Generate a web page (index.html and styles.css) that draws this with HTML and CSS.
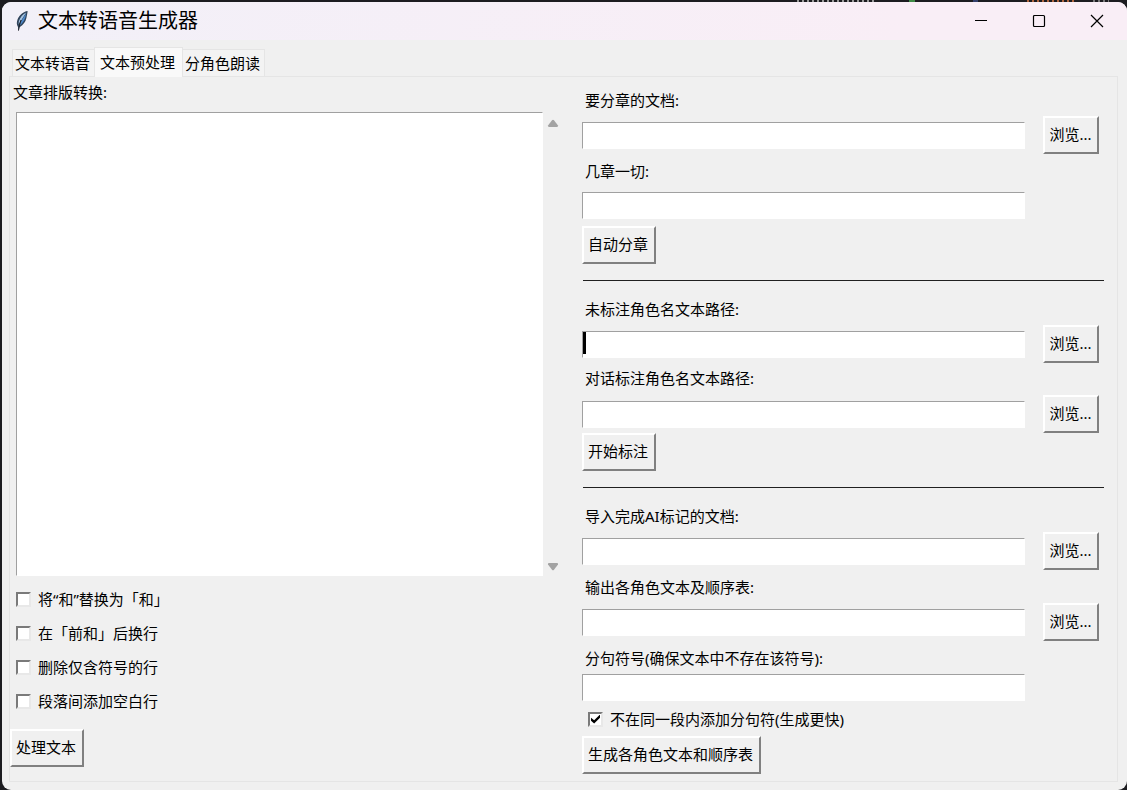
FILE: index.html
```html
<!DOCTYPE html>
<html lang="zh-CN">
<head>
<meta charset="utf-8">
<title>文本转语音生成器</title>
<link rel="stylesheet" href="styles.css">
</head>
<body>
<div class="window">
  <header class="titlebar">
    <svg class="feather" width="14" height="22" viewBox="0 0 14 22" aria-hidden="true">
      <path d="M12.6 1C8.4 1.6 4.4 5 2.6 9.2C1.4 12.2 1.6 14.8 3 17L3.6 20.4L4.6 17.2C8.6 14.6 10.6 11.8 11.4 8C12 5.2 12.4 3.4 12.6 1Z" fill="#31455c"/>
      <path d="M11.2 2.4C8 4 4.8 7.4 3.8 11.4L3.6 14.6C6 10.6 8.4 6.6 11.2 2.4Z" fill="#a5c4e4"/>
      <path d="M11.2 3.2C8.6 7.2 6 11.4 4.6 15.6C8.2 13 10.6 8.6 11.2 3.2Z" fill="#4c88cc"/>
      <path d="M6 10C5 12.6 4 16 3.5 20.6" fill="none" stroke="#1b2028" stroke-width="1"/>
    </svg>
    <h1 class="title">文本转语音生成器</h1>
    <div class="controls">
      <button class="control" type="button" aria-label="最小化"><svg width="14" height="14" viewBox="0 0 14 14"><path d="M1 6.5H13" stroke="#000" fill="none"/></svg></button>
      <button class="control" type="button" aria-label="最大化"><svg width="14" height="14" viewBox="0 0 14 14"><rect x="1.5" y="1.5" width="11" height="11" rx="1" stroke="#000" stroke-width="1.2" fill="none"/></svg></button>
      <button class="control" type="button" aria-label="关闭"><svg width="14" height="14" viewBox="0 0 14 14"><path d="M1 1L13 13M13 1L1 13" stroke="#000" stroke-width="1.2" fill="none"/></svg></button>
    </div>
  </header>

  <nav class="tabs" role="tablist">
    <button class="tab" type="button" role="tab">文本转语音</button>
    <button class="tab tab-active" type="button" role="tab" aria-selected="true">文本预处理</button>
    <button class="tab" type="button" role="tab">分角色朗读</button>
  </nav>

  <main class="pane">
    <section class="layout-column">
      <label class="article-label" for="article">文章排版转换:</label>
      <div class="editor">
        <textarea class="sunken article" id="article"></textarea>
        <div class="scrollbar">
          <svg width="12" height="9" viewBox="0 0 12 9"><path d="M5 1.2Q6 .2 7 1.2L11 6.6Q11.3 8 10 8H2Q.7 8 1 6.6Z" fill="#a3a3a3"/></svg>
          <svg width="12" height="9" viewBox="0 0 12 9"><path d="M5 7.8Q6 8.8 7 7.8L11 2.4Q11.3 1 10 1H2Q.7 1 1 2.4Z" fill="#a3a3a3"/></svg>
        </div>
      </div>
      <div class="options">
        <label class="check"><input type="checkbox">将“和”替换为「和」</label>
        <label class="check"><input type="checkbox">在「前和」后换行</label>
        <label class="check"><input type="checkbox">删除仅含符号的行</label>
        <label class="check"><input type="checkbox">段落间添加空白行</label>
      </div>
      <button class="raised" type="button">处理文本</button>
    </section>

    <section class="form-column">
      <div class="group">
        <label class="field-label" for="chapter-doc">要分章的文档:</label>
        <div class="row"><input class="sunken" id="chapter-doc" type="text"><button class="raised browse" type="button">浏览...</button></div>
        <label class="field-label" for="chapter-count">几章一切:</label>
        <div class="row row-plain"><input class="sunken" id="chapter-count" type="text"></div>
        <button class="raised submit" type="button">自动分章</button>
      </div>
      <hr class="divider">
      <div class="group group-tight">
        <label class="field-label" for="unmarked">未标注角色名文本路径:</label>
        <div class="row row-focus"><input class="sunken" id="unmarked" type="text"><button class="raised browse" type="button">浏览...</button></div>
        <label class="field-label" for="marked">对话标注角色名文本路径:</label>
        <div class="row"><input class="sunken" id="marked" type="text"><button class="raised browse" type="button">浏览...</button></div>
        <button class="raised submit" type="button">开始标注</button>
      </div>
      <hr class="divider">
      <div class="group">
        <label class="field-label" for="ai-doc">导入完成AI标记的文档:</label>
        <div class="row"><input class="sunken" id="ai-doc" type="text"><button class="raised browse" type="button">浏览...</button></div>
        <label class="field-label" for="output">输出各角色文本及顺序表:</label>
        <div class="row"><input class="sunken" id="output" type="text"><button class="raised browse" type="button">浏览...</button></div>
        <label class="field-label" for="separator">分句符号(确保文本中不存在该符号):</label>
        <div class="row"><input class="sunken" id="separator" type="text"></div>
        <label class="check check-form"><input type="checkbox" checked>不在同一段内添加分句符(生成更快)</label>
        <button class="raised submit" type="button">生成各角色文本和顺序表</button>
      </div>
    </section>
  </main>
</div>
</body>
</html>
```
FILE: styles.css
```css
* {
  box-sizing: border-box;
}

/* The desktop behind the window shows at the top and left edges */
body {
  margin: 0;
  padding: 2px 0 0 2px;
  min-height: 100vh;
  display: flex;
  background:
    repeating-linear-gradient(90deg, #9a9a9a 0 2px, #1c1c20 2px 5px) 797px 0 / 80px 2px no-repeat,
    linear-gradient(#3f8a45, #3f8a45) 909px 0 / 6px 2px no-repeat,
    linear-gradient(#34406c, #34406c) 973px 0 / 5px 2px no-repeat,
    repeating-linear-gradient(90deg, #b0643c 0 2px, #1c1c20 2px 5px) 1027px 0 / 50px 2px no-repeat,
    repeating-linear-gradient(90deg, #777 0 2px, #1c1c20 2px 5px) 1093px 0 / 16px 2px no-repeat,
    #1c1c20;
  color: #000;
  font: 15px/20px "Noto Sans", "Noto Sans CJK SC", sans-serif;
}

button,
input,
textarea {
  font: inherit;
  color: inherit;
  margin: 0;
  border-radius: 0;
  outline: 0;
}

.window {
  flex: 1;
  display: flex;
  flex-direction: column;
  padding-bottom: 8px;
  background: #f0f0f0;
  border-radius: 9px;
  overflow: hidden;
}

/* Title bar */
.titlebar {
  display: flex;
  align-items: center;
  height: 38px;
  padding: 0 1px 0 13px;
  background: linear-gradient(90deg, #f2f0f8, #f9eef6 80%);
}

.title {
  flex: 1;
  margin: 0 0 0 9px;
  font-size: 20px;
  line-height: 28px;
  font-weight: 400;
}

.controls {
  display: flex;
}

.control {
  display: grid;
  place-items: center;
  width: 58px;
  height: 38px;
  padding: 0;
  border: 0;
  background: transparent;
}

/* Tabs */
.tabs {
  display: flex;
  align-items: flex-end;
  margin-top: 7px;
  padding-left: 10px;
}

.tab {
  height: 27px;
  padding: 0 4px 0 2px;
  border: 1px solid #e5e5e5;
  border-bottom: 0;
  background: #f3f3f3;
}

.tab-active {
  height: 30px;
  margin: 0 -1px -1px;
  padding: 0 7px 2px 5px;
  background: #f9f9f9;
  z-index: 1;
}

.pane {
  flex: 1;
  display: grid;
  grid-template-columns: 554fr 522fr;
  column-gap: 18px;
  margin: 0 9px 0 7px;
  padding-right: 13px;
  border: 1px solid #e5e5e5;
}

/* Article column */
.layout-column {
  display: flex;
  flex-direction: column;
  align-items: flex-start;
  padding: 5px 0 14px;
}

.article-label {
  margin: 0 3px 10px;
}

.editor {
  flex: 1;
  align-self: stretch;
  display: flex;
  gap: 4px;
  padding: 0 5px 0 6px;
}

.article {
  flex: 1;
  resize: none;
}

.scrollbar {
  display: flex;
  flex-direction: column;
  justify-content: space-between;
  padding: 7px 0 5px;
}

.options {
  display: grid;
  gap: 14px;
  margin: 13px 6px 18px;
}

.check {
  display: flex;
  align-items: center;
  gap: 7px;
}

.check input {
  appearance: none;
  display: grid;
  place-items: center;
  width: 15px;
  height: 15px;
  background: #fff;
  border: 2px solid;
  border-color: #7a7a7a #e8e8e8 #e8e8e8 #7a7a7a;
}

.check input:checked::before {
  content: "";
  width: 9px;
  height: 9px;
  background: #000;
  clip-path: polygon(0 35%, 35% 65%, 100% 0, 100% 35%, 35% 100%, 0 70%);
}

/* Bevelled controls */
.sunken {
  border: 1px solid;
  border-color: #a0a0a0 #fff #fff #a0a0a0;
  background: #fff;
}

.raised {
  height: 38px;
  padding: 0 6px 2px 4px;
  border: 2px solid;
  border-color: #fff #808080 #808080 #fff;
  background: #f0f0f0;
  white-space: nowrap;
}

.browse {
  padding: 0 5px 2px 4px;
}

/* Form column */
.form-column {
  padding-top: 6px;
}

.group {
  display: flex;
  flex-direction: column;
  align-items: flex-start;
}

.field-label {
  margin: 7px 0 6px 3px;
}

.submit {
  margin-top: 7px;
}

.group-tight .submit {
  margin-top: 0;
}

.group-tight .row + .field-label {
  margin: 5px 0 7px 3px;
}

.row {
  position: relative;
  align-self: stretch;
  display: grid;
  grid-template-columns: 1fr 56px;
  align-items: center;
  column-gap: 18px;
  padding-right: 5px;
}

.row-plain {
  margin-top: 5px;
}

.row .sunken {
  width: 100%;
  height: 27px;
}

.row-focus::before {
  content: "";
  position: absolute;
  left: 1px;
  top: 7px;
  width: 3px;
  height: 22px;
  background: #000;
}

.divider {
  height: 1px;
  margin: 16px 0 11px 1px;
  border: 0;
  background: #202020;
}

.check-form {
  margin: 8px 0 0 6px;
}
```
